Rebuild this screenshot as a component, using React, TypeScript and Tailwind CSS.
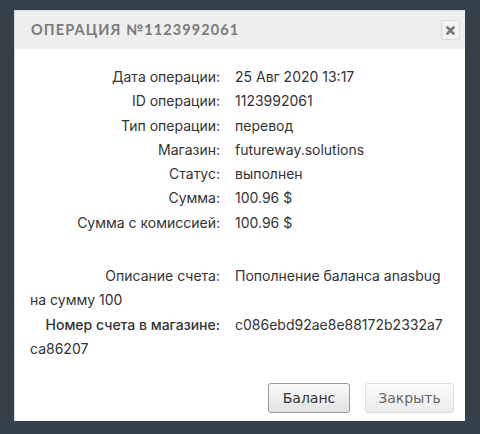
import React from "react";

const rows: [string, string][] = [
  ["Дата операции:", "25 Авг 2020 13:17"],
  ["ID операции:", "1123992061"],
  ["Тип операции:", "перевод"],
  ["Магазин:", "futureway.solutions"],
  ["Статус:", "выполнен"],
  ["Сумма:", "100.96 $"],
  ["Сумма с комиссией:", "100.96 $"],
];

function Row({ label, children, bold }: { label: string; children: React.ReactNode; bold?: boolean }) {
  return (
    <div className="leading-[24.3px]">
      <span className={bold ? "inline-block w-[190px] text-right mr-[15px] font-medium" : "inline-block w-[190px] text-right mr-[15px]"}>
        {label}
      </span>
      {children}
    </div>
  );
}

export default function App() {
  return (
    <div className="w-[480px] h-[434px] bg-[#35414a] pt-[10px] pl-[14px]">
      <div className="w-[451px] h-[411px] bg-white flex flex-col border-l border-t border-[#d8d8d8]">
        <div className="h-[38px] bg-[#eeeeee] flex items-center justify-between pl-[16px] pr-[5px]">
          <span
            className="text-[14.5px] font-bold tracking-[1.1px] text-[#7a7a7a]"
            style={{ fontFamily: 'Lato, sans-serif' }}
          >
            ОПЕРАЦИЯ №1123992061
          </span>
          <div className="w-[19px] h-[20px] border border-[#dcdcdc] bg-[#f2f2f2] rounded-[2px] flex items-center justify-center">
            <svg width="9" height="9" viewBox="0 0 9 9">
              <path d="M1.5 1.5 L7.5 7.5 M7.5 1.5 L1.5 7.5" stroke="#777" strokeWidth="2.6" strokeLinecap="round" />
            </svg>
          </div>
        </div>
        <div
          className="flex-1 pl-[15px] pt-[16px] text-[14px] text-[#333333]"
          style={{ fontFamily: 'Inter, sans-serif' }}
        >
          {rows.map(([l, v]) => (
            <Row key={l} label={l}>{v}</Row>
          ))}
          <div className="h-[29px]" />
          <Row label="Описание счета:">
            Пополнение баланса anasbug
            <br />
            на сумму 100
          </Row>
          <Row label="Номер счета в магазине:" bold>
            c086ebd92ae8e88172b2332a7
            <br />
            ca86207
          </Row>
        </div>
        <div
          className="flex justify-end gap-[15px] pr-[11px] pb-[8px] text-[14px]"
          style={{ fontFamily: '"DejaVu Sans", sans-serif' }}
        >
          <button className="w-[82px] h-[30px] rounded-[3px] border border-[#9a9a9a] bg-gradient-to-b from-[#fbfbfb] to-[#e2e2e2] text-[#333]">
            Баланс
          </button>
          <button className="w-[89px] h-[30px] rounded-[3px] border border-[#dddddd] bg-gradient-to-b from-[#fbfbfb] to-[#ececec] text-[#666]">
            Закрыть
          </button>
        </div>
      </div>
    </div>
  );
}
